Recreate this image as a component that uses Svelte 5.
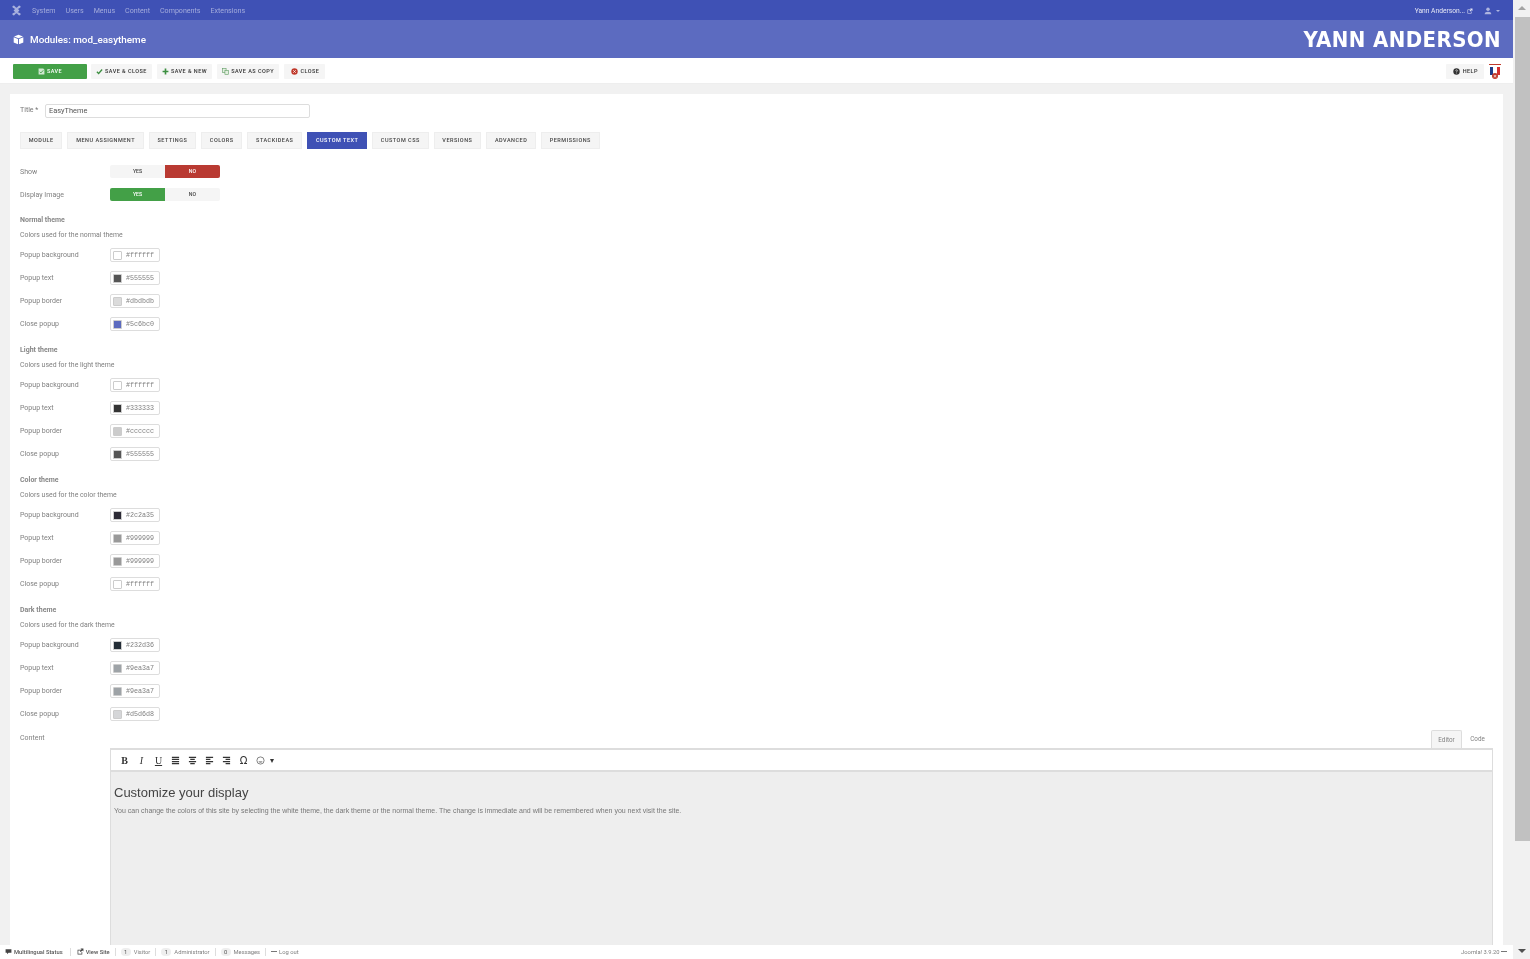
<script lang="ts">
    const topMenu = ["System", "Users", "Menus", "Content", "Components", "Extensions"];
    const tabs = ["Module", "Menu Assignment", "Settings", "Colors", "StackIdeas", "Custom Text", "Custom CSS", "Versions", "Advanced", "Permissions"];
    const labels = ["Popup background", "Popup text", "Popup border", "Close popup"];
    const themes = [
        { title: "Normal theme", desc: "Colors used for the normal theme", colors: ["#ffffff", "#555555", "#dbdbdb", "#5c6bc0"] },
        { title: "Light theme", desc: "Colors used for the light theme", colors: ["#ffffff", "#333333", "#cccccc", "#555555"] },
        { title: "Color theme", desc: "Colors used for the color theme", colors: ["#2c2a35", "#999999", "#999999", "#ffffff"] },
        { title: "Dark theme", desc: "Colors used for the dark theme", colors: ["#232d36", "#9ea3a7", "#9ea3a7", "#d5d6d8"] },
    ];
</script>

<div class="page">
    <div class="main">
        <nav class="topbar">
            <svg class="joomla" viewBox="0 0 16 16" width="11" height="11"><path d="M2 2.500a1.800 1.800 0 0 1 3.400-.6L8 4.500 6.500 6 3.600 4.300A1.800 1.800 0 0 1 2 2.500zM14 2.500a1.800 1.800 0 0 0-3.400-.6L8 4.500 9.500 6l2.900-1.700A1.800 1.800 0 0 0 14 2.500zM2 13.500a1.800 1.800 0 0 0 3.400.6L8 11.500 6.500 10l-2.900 1.700A1.800 1.800 0 0 0 2 13.500zM14 13.500a1.800 1.800 0 0 1-3.400.6L8 11.500 9.500 10l2.900 1.700a1.800 1.800 0 0 1 1.600 1.800z" fill="#a9b1de"/><rect x="5" y="5" width="6" height="6" transform="rotate(45 8 8)" fill="#a9b1de"/></svg>
            <ul class="menu">
                {#each topMenu as item}
                    <li>{item}</li>
                {/each}
            </ul>
            <div class="user">
                <span>Yann Anderson...</span>
                <svg viewBox="0 0 12 12" width="6" height="6"><path d="M1 3h6v1.200H2.200v5.600h5.600V7H9v4H1zM6 1h5v5L9.300 4.300 6.500 7 5 5.500 7.700 2.700z" fill="#dfe2f3"/></svg>
                <svg class="person" viewBox="0 0 12 12" width="8" height="8"><circle cx="6" cy="3.500" r="2.600" fill="#aeb5e0"/><path d="M1 11c0-3 2-4 5-4s5 1 5 4z" fill="#aeb5e0"/></svg>
                <i class="caret"></i>
            </div>
        </nav>

        <header class="header">
            <div class="title">
                <svg viewBox="0 0 16 16" width="11" height="11"><path d="M8 1l6.500 2.500L8 6 1.500 3.500zM1 4.800l6.300 2.400V15L1 12.300zM15 4.800L8.700 7.200V15l6.300-2.700z" fill="#fff"/></svg>
                <span>Modules: mod_easytheme</span>
            </div>
            <div class="brand">YANN ANDERSON</div>
        </header>

        <div class="toolbar">
            <button class="btn save">
                <svg viewBox="0 0 12 12" width="7" height="7"><path d="M1 1h8l2 2v8H1z" fill="#cfe8d0"/><path d="M3 6.500l2 2 4-4.500" stroke="#43a047" stroke-width="1.500" fill="none"/></svg>
                Save
            </button>
            <button class="btn">
                <svg viewBox="0 0 12 12" width="7" height="7"><path d="M1.500 6.500l3 3 6-7" stroke="#3c8f40" stroke-width="2.200" fill="none"/></svg>
                Save &amp; Close
            </button>
            <button class="btn">
                <svg viewBox="0 0 12 12" width="7" height="7"><path d="M6 1v10M1 6h10" stroke="#3c8f40" stroke-width="2.800"/></svg>
                Save &amp; New
            </button>
            <button class="btn">
                <svg viewBox="0 0 12 12" width="7" height="7"><rect x="1" y="1" width="6" height="7" fill="#e3efe0" stroke="#5b9a5f"/><rect x="5" y="4" width="6" height="7" fill="#e3efe0" stroke="#5b9a5f"/></svg>
                Save as Copy
            </button>
            <button class="btn wide">
                <svg viewBox="0 0 12 12" width="7" height="7"><circle cx="6" cy="6" r="5.500" fill="#c0392b"/><path d="M3.800 3.800l4.400 4.400M8.200 3.800L3.800 8.200" stroke="#fff" stroke-width="1.300"/></svg>
                Close
            </button>
            <div class="toolbar-right">
                <button class="btn wide">
                    <svg viewBox="0 0 12 12" width="7" height="7"><circle cx="6" cy="6" r="5.500" fill="#333"/><path d="M4.500 4.700c.2-2 3.200-1.800 3 0-.1 1-1.500 1-1.500 2.300" stroke="#fff" stroke-width="1.100" fill="none"/><rect x="5.400" y="8" width="1.200" height="1.200" fill="#fff"/></svg>
                    Help
                </button>
                <div class="flag">
                    <div class="stripes">
                        <span class="flag-b"></span><span class="flag-w"></span><span class="flag-r"></span>
                    </div>
                    <i class="flag-x">×</i>
                </div>
            </div>
        </div>

        <div class="body">
            <section class="card">
                <div class="title-row">
                    <span class="field-label">Title *</span>
                    <div class="title-input">EasyTheme</div>
                </div>

                <div class="tabs">
                    {#each tabs as tab}
                        <div class="tab" class:active={tab === "Custom Text"}>{tab}</div>
                    {/each}
                </div>

                <div class="switches">
                    <div class="row switch-row">
                        <span class="label">Show</span>
                        <div class="switcher"><span>Yes</span><span class="red">No</span></div>
                    </div>
                    <div class="row switch-row">
                        <span class="label">Display Image</span>
                        <div class="switcher"><span class="green">Yes</span><span>No</span></div>
                    </div>
                </div>

                {#each themes as theme}
                    <div class="group">
                        <h4>{theme.title}</h4>
                        <p>{theme.desc}</p>
                        {#each theme.colors as color, i}
                            <div class="row color-row">
                                <span class="label">{labels[i]}</span>
                                <div class="color-input">
                                    <i class="swatch" style="background: {color}"></i>
                                    <span>{color}</span>
                                </div>
                            </div>
                        {/each}
                    </div>
                {/each}

                <div class="content-row">
                    <span class="label content-label">Content</span>
                    <div class="editor">
                        <div class="editor-tabs">
                            <span class="etab on">Editor</span>
                            <span class="etab">Code</span>
                        </div>
                        <div class="editor-box">
                            <div class="mce-bar">
                                <b class="tool serif">B</b>
                                <i class="tool serif">I</i>
                                <u class="tool serif">U</u>
                                <svg class="tool-svg" viewBox="0 0 10 10"><path d="M1 1.500h8M1 3.800h8M1 6.200h8M1 8.500h8" stroke="#333" stroke-width="1.300"/></svg>
                                <svg class="tool-svg" viewBox="0 0 10 10"><path d="M1 1.500h8M2.500 3.800h5M1 6.200h8M2.500 8.500h5" stroke="#333" stroke-width="1.300"/></svg>
                                <svg class="tool-svg" viewBox="0 0 10 10"><path d="M1 1.500h8M1 3.800h5M1 6.200h8M1 8.500h5" stroke="#333" stroke-width="1.300"/></svg>
                                <svg class="tool-svg" viewBox="0 0 10 10"><path d="M1 1.500h8M4 3.800h5M1 6.200h8M4 8.500h5" stroke="#333" stroke-width="1.300"/></svg>
                                <span class="tool omega">Ω</span>
                                <svg class="tool-svg smile" viewBox="0 0 10 10"><circle cx="5" cy="5" r="4" fill="none" stroke="#555" stroke-width=".8"/><path d="M2.800 6c.8 1.500 3.600 1.500 4.400 0z" fill="#555"/></svg>
                                <i class="mce-caret"></i>
                            </div>
                            <div class="mce-body">
                                <h1>Customize your display</h1>
                                <p>You can change the colors of this site by selecting the white theme, the dark theme or the normal theme. The change is immediate and will be remembered when you next visit the site.</p>
                            </div>
                        </div>
                    </div>
                </div>
            </section>
        </div>

        <footer class="status">
            <span class="st first">
                <svg viewBox="0 0 12 12" width="7" height="7"><path d="M1 2h10v6H6L3.500 10.500V8H1z" fill="#444"/></svg>
                <b>Multilingual Status</b>
            </span>
            <span class="st second">
                <svg viewBox="0 0 12 12" width="7" height="7"><path d="M1 3h6v1.200H2.200v5.600h5.600V7H9v4H1zM6 1h5v5L9.300 4.300 6.500 7 5 5.500 7.700 2.700z" fill="#444"/></svg>
                <b>View Site</b>
            </span>
            <span class="st"><em>1</em>Visitor</span>
            <span class="st"><em>1</em>Administrator</span>
            <span class="st"><em>0</em>Messages</span>
            <span class="st last"><i class="dash"></i>Log out</span>
            <span class="version">Joomla! 3.9.20 <i class="dash"></i></span>
        </footer>
    </div>

    <aside class="scrollbar">
        <i class="arrow up"></i>
        <div class="thumb"></div>
        <i class="arrow down"></i>
    </aside>
</div>

<style>
    :global(body) {
        margin: 0;
        background: #f1f1f1;
        overflow: hidden;
    }

    .page {
        display: flex;
        height: 959px;
        overflow: hidden;
        font-family: Roboto, "Liberation Sans", sans-serif;
        color: #666;
    }

    /* the reference is a downscaled capture: soft, grey-antialiased text */
    .main {
        flex: 1;
        min-width: 0;
        display: flex;
        flex-direction: column;
        will-change: transform;
        filter: blur(.4px);
    }

    .topbar {
        height: 20px;
        flex: none;
        box-sizing: border-box;
        display: flex;
        align-items: center;
        padding: 1px 13px 0 11px;
        background: #3f51b5;
        color: #a4acdc;
        font-size: 7.100px;
    }

    .joomla {
        margin: -1px 10px 0 0;
    }

    .menu {
        display: flex;
        gap: 10px;
        margin: 0;
        padding: 0;
        list-style: none;
    }

    .user {
        margin-left: auto;
        display: flex;
        align-items: center;
        color: #e4e6f5;
        font-size: 6.700px;
        gap: 2px;
    }

    .person {
        margin-left: 9px;
    }

    .caret {
        margin-left: 2px;
        border: 2px solid transparent;
        border-top-color: #aeb5e0;
        border-bottom: 0;
    }

    .header {
        height: 38px;
        flex: none;
        display: flex;
        align-items: center;
        justify-content: space-between;
        padding: 0 12px 0 13px;
        background: #5c6bc0;
        color: #fff;
    }

    .title {
        display: flex;
        align-items: center;
        gap: 6px;
        font-size: 9.900px;
        font-weight: 500;
    }

    .brand {
        font-family: "DejaVu Sans Condensed", "DejaVu Sans", sans-serif;
        font-weight: 700;
        font-size: 22px;
        letter-spacing: .4px;
    }

    .toolbar {
        height: 26px;
        flex: none;
        display: flex;
        align-items: center;
        gap: 5px;
        padding: 1px 12px 0 13px;
        background: #fff;
        box-sizing: border-box;
        border-bottom: 1px solid #eee;
    }

    .toolbar-right {
        margin-left: auto;
        display: flex;
        align-items: center;
        gap: 5px;
    }

    .btn {
        height: 15px;
        padding: 0 5.100px;
        display: flex;
        align-items: center;
        gap: 2px;
        border: 0;
        border-radius: 1px;
        background: #f5f5f5;
        color: #333;
        font-family: Roboto, sans-serif;
        font-size: 5.500px;
        font-weight: 500;
        letter-spacing: .45px;
        text-transform: uppercase;
    }

    .btn.wide {
        padding: 0 6px 0 6.500px;
        gap: 3px;
    }

    .save {
        width: 74px;
        justify-content: center;
        background: #43a047;
        color: #fff;
        margin-right: -1px;
    }

    .flag {
        position: relative;
        width: 12px;
        height: 15px;
        box-sizing: border-box;
        border-top: 1px solid #c0392b;
        background: #fff;
    }

    .stripes {
        display: flex;
        height: 8px;
        margin: 2px 1px 0;
    }

    .stripes span {
        flex: 1;
    }

    .flag-b {
        background: #1f3c88;
    }

    .flag-w {
        background: #fff;
    }

    .flag-r {
        background: #d32f2f;
    }

    .flag-x {
        position: absolute;
        left: 3px;
        bottom: 0;
        width: 6px;
        height: 6px;
        border-radius: 50%;
        background: #c0392b;
        color: #fff;
        font: 6px/6px "Liberation Sans", sans-serif;
        text-align: center;
    }

    .body {
        flex: 1;
        min-height: 0;
        overflow: hidden;
        padding: 10px 10px 0;
    }

    .card {
        height: 1000px;
        padding: 10px 10px 0;
        background: #fff;
    }

    .title-row {
        display: flex;
        align-items: center;
        height: 14px;
    }

    .field-label {
        width: 25px;
        font-size: 7px;
        color: #777;
        margin-top: -3px;
    }

    .title-input {
        width: 265px;
        height: 14px;
        box-sizing: border-box;
        padding-left: 3px;
        border: 1px solid #ddd;
        border-radius: 2px;
        color: #555;
        font-size: 7.400px;
        line-height: 12px;
    }

    .tabs {
        display: flex;
        gap: 5px;
        margin-top: 14px;
    }

    .tab {
        height: 17px;
        box-sizing: border-box;
        padding: 0 7.750px;
        border: 1px solid #eee;
        background: #f5f5f5;
        color: #444;
        font-size: 5.500px;
        font-weight: 500;
        letter-spacing: .5px;
        line-height: 15px;
        text-transform: uppercase;
    }

    .tab.active {
        background: #3f51b5;
        border-color: #3f51b5;
        color: #fff;
    }

    .row {
        display: flex;
        align-items: center;
    }

    .label {
        width: 90px;
        font-size: 7px;
        color: #808080;
    }

    .switches {
        display: flex;
        flex-direction: column;
        gap: 10px;
        margin: 16px 0 15px;
    }

    .switch-row {
        height: 13px;
    }

    .switcher {
        display: flex;
        width: 110px;
        height: 13px;
        border-radius: 2px;
        overflow: hidden;
        background: #f5f5f5;
    }

    .switcher span {
        flex: 1;
        text-align: center;
        color: #444;
        font-size: 5.200px;
        font-weight: 500;
        line-height: 13px;
        text-transform: uppercase;
    }

    .switcher .red {
        background: #b93a32;
        color: #fff;
    }

    .switcher .green {
        background: #43a047;
        color: #fff;
    }

    .group {
        margin-bottom: 15px;
    }

    h4 {
        margin: 0;
        height: 8px;
        color: #888;
        font-size: 7px;
        font-weight: 700;
        line-height: 8px;
    }

    .group p {
        margin: 7px 0 9px;
        height: 8px;
        font-size: 6.900px;
        line-height: 8px;
        color: #808080;
    }

    .color-row {
        height: 14px;
        margin-bottom: 9px;
    }

    .color-row:last-child {
        margin-bottom: 0;
    }

    .color-input {
        display: flex;
        align-items: center;
        width: 50px;
        height: 14px;
        box-sizing: border-box;
        padding-left: 2px;
        border: 1px solid #ddd;
        border-radius: 2px;
        color: #808080;
        font-family: "Liberation Mono", monospace;
        font-size: 6.700px;
    }

    .swatch {
        width: 9px;
        height: 9px;
        box-sizing: border-box;
        margin-right: 4px;
        border: 1px solid #ccc;
        border-radius: 1px;
    }

    .content-row {
        display: flex;
        margin-top: -3px;
    }

    .content-label {
        flex: none;
        margin-top: 1px;
    }

    .editor {
        flex: 1;
        margin-top: -3px;
    }

    .editor-tabs {
        display: flex;
        justify-content: flex-end;
        height: 18px;
    }

    .etab {
        width: 31px;
        box-sizing: border-box;
        text-align: center;
        color: #808080;
        font-size: 6.300px;
        line-height: 19px;
    }

    .etab.on {
        border: 1px solid #ddd;
        border-bottom: 0;
        border-radius: 2px 2px 0 0;
        background: #f5f5f5;
    }

    .editor-box {
        height: 400px;
        border: 1px solid #ddd;
        border-top: 2px solid #ddd;
        box-sizing: border-box;
        background: #eee;
    }

    .mce-bar {
        display: flex;
        align-items: center;
        height: 22px;
        box-sizing: border-box;
        padding: 1px 0 0 5px;
        background: #fff;
        border-bottom: 2px solid #ddd;
    }

    .tool {
        width: 17px;
        text-align: center;
        color: #333;
        font-size: 10px;
    }

    .serif {
        font-family: "Liberation Serif", serif;
    }

    .omega {
        font-family: "DejaVu Sans", sans-serif;
        font-size: 10px;
    }

    .tool-svg {
        width: 9px;
        height: 9px;
        padding: 0 4px;
    }

    .smile {
        padding-right: 5px;
    }

    .mce-caret {
        border: 2.500px solid transparent;
        border-top: 4px solid #333;
        border-bottom: 0;
    }

    .mce-body {
        padding: 13px 3px;
    }

    .mce-body h1 {
        margin: 0 0 6px;
        color: #444;
        font-family: "Liberation Sans", sans-serif;
        font-size: 13px;
        font-weight: 400;
        line-height: 16px;
    }

    .mce-body p {
        margin: 0;
        color: #777;
        font-family: "Liberation Sans", sans-serif;
        font-size: 7px;
        line-height: 8px;
    }

    .status {
        height: 14px;
        flex: none;
        box-sizing: border-box;
        display: flex;
        align-items: center;
        padding: 0 0 1px 5px;
        background: #fff;
        color: #808080;
        font-size: 5.800px;
    }

    .st {
        display: flex;
        align-items: center;
        gap: 2px;
        height: 8px;
        padding: 0 5px;
        border-right: 1px solid #ddd;
    }

    .st.first {
        padding: 0 7px 0 0;
    }

    .st.second {
        padding-left: 6px;
    }

    .st.last {
        border-right: 0;
    }

    .st b {
        font-weight: 500;
        color: #555;
    }

    .st em {
        width: 10px;
        height: 8px;
        margin-right: 1px;
        border-radius: 4px;
        background: #eee;
        color: #555;
        font-style: normal;
        line-height: 8px;
        text-align: center;
    }

    .dash {
        display: inline-block;
        width: 6px;
        height: 1px;
        background: #777;
        vertical-align: middle;
    }

    .version {
        margin-left: auto;
        margin-right: 6px;
    }

    .scrollbar {
        position: relative;
        flex: none;
        width: 17px;
        background: #f1f1f1;
    }

    .thumb {
        position: absolute;
        top: 17px;
        left: 2px;
        right: 0;
        height: 824px;
        background: #c1c1c1;
    }

    .arrow {
        position: absolute;
        left: 5px;
        border: 4px solid transparent;
    }

    .arrow.up {
        top: 6px;
        border-top: 0;
        border-bottom-color: #a3a3a3;
    }

    .arrow.down {
        bottom: 6px;
        border-bottom: 0;
        border-top-color: #505050;
    }
</style>
